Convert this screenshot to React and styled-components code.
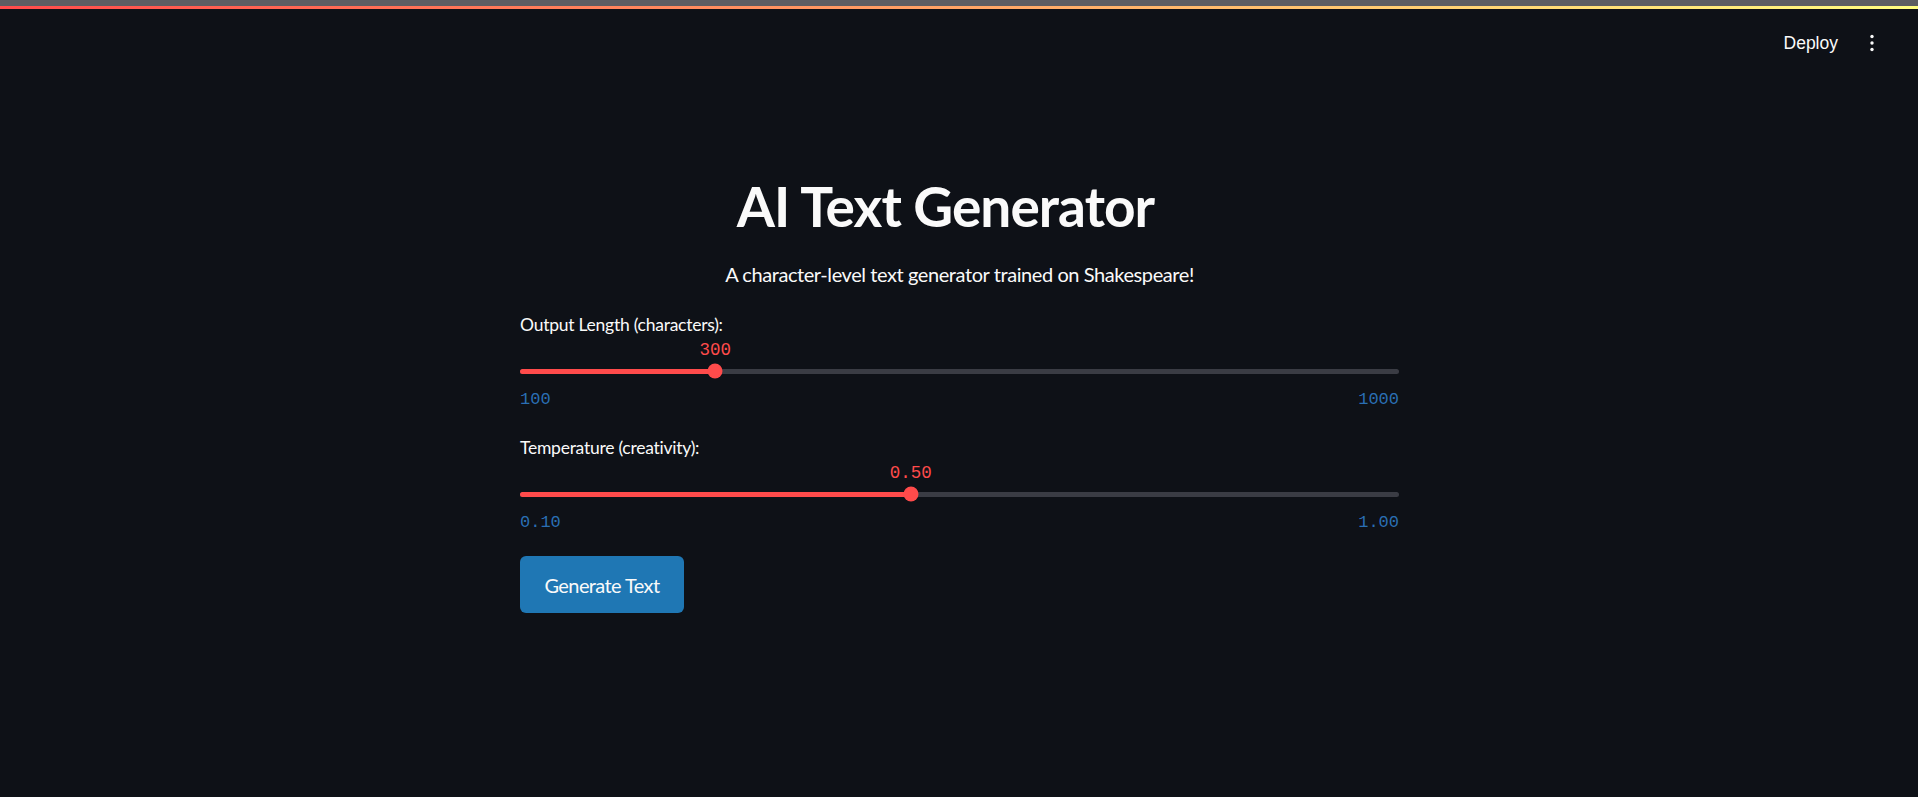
import React from "react";
import styled, { createGlobalStyle } from "styled-components";

const GlobalStyle = createGlobalStyle`
  html, body {
    margin: 0;
    padding: 0;
    background-color: #0e1117;
  }
  body {
    font-family: "Lato", "Liberation Sans", sans-serif;
    color: #fafafa;
  }
`;

const AppWrap = styled.div`
  min-height: 797px;
  background-color: #0e1117;
  display: flex;
  flex-direction: column;
`;

const TopStrip = styled.div`
  height: 6px;
  background-color: #5c5d62;
`;

const Decoration = styled.div`
  height: 3px;
  background-image: linear-gradient(90deg, #ff4b4b, #fffd80);
`;

const Header = styled.header`
  display: flex;
  justify-content: flex-end;
  align-items: center;
  height: 86px;
  padding-right: 38px;
  margin-top: -9px;
  gap: 26px;
`;

const DeployButton = styled.button`
  background: none;
  border: none;
  color: #fafafa;
  font-family: "Liberation Sans", Arial, sans-serif;
  font-size: 17.5px;
  padding: 0;
  cursor: pointer;
`;

const MenuButton = styled.button`
  background: none;
  border: none;
  padding: 0;
  width: 16px;
  height: 24px;
  display: flex;
  align-items: center;
  justify-content: center;
  cursor: pointer;
`;

const Main = styled.main`
  width: 879px;
  margin: 0 auto;
  padding-top: 87px;
  padding-left: 1px;
  display: flex;
  flex-direction: column;
`;

const Title = styled.h1`
  margin: 0;
  padding-right: 28px;
  text-align: center;
  font-size: 55px;
  line-height: 66px;
  font-weight: 700;
  letter-spacing: -0.95px;
`;

const Subtitle = styled.p`
  margin: 19px 0 0;
  text-align: center;
  font-size: 20px;
  line-height: 32px;
  letter-spacing: -0.42px;
`;

const Field = styled.div`
  margin-top: ${(p) => p.$gap}px;
`;

const Label = styled.div`
  font-size: 17.5px;
  line-height: 28px;
  letter-spacing: -0.25px;
`;

const SliderBox = styled.div`
  position: relative;
  padding-top: 22px;
`;

const ValueTag = styled.div`
  position: absolute;
  top: 0;
  transform: translateX(-50%);
  font-family: "Liberation Mono", monospace;
  font-size: 17.5px;
  line-height: 22px;
  color: #ff4b4b;
  white-space: nowrap;
`;

const TrackArea = styled.div`
  position: relative;
  height: 20px;
  display: flex;
  align-items: center;
`;

const Track = styled.div`
  width: 100%;
  height: 5px;
  border-radius: 3px;
  background-color: #3a3c44;
  overflow: hidden;
`;

const Fill = styled.div`
  height: 100%;
  background-color: #ff4b4b;
`;

const Thumb = styled.div`
  position: absolute;
  top: 50%;
  width: 15px;
  height: 15px;
  border-radius: 50%;
  background-color: #ff4b4b;
  transform: translate(-50%, -50%);
`;

const Ticks = styled.div`
  display: flex;
  justify-content: space-between;
  margin-top: 8px;
  font-family: "Liberation Mono", monospace;
  font-size: 17px;
  line-height: 22px;
  color: #2a6fb4;
`;

const GenerateButton = styled.button`
  align-self: flex-start;
  margin-top: 22px;
  width: 164px;
  height: 57px;
  border: none;
  border-radius: 6px;
  background-color: #1f77b4;
  color: #fafafa;
  font-family: "Lato", sans-serif;
  font-size: 20px;
  letter-spacing: -0.6px;
  cursor: pointer;
`;

const DotsIcon = () => (
  <svg width="6" height="20" viewBox="0 0 6 20">
    <circle cx="3" cy="3.5" r="1.7" fill="#fafafa" />
    <circle cx="3" cy="10" r="1.7" fill="#fafafa" />
    <circle cx="3" cy="16.5" r="1.7" fill="#fafafa" />
  </svg>
);

const Slider = ({ label, min, max, value, format, gap }) => {
  const pct = ((value - min) / (max - min)) * 100;
  return (
    <Field $gap={gap}>
      <Label>{label}</Label>
      <SliderBox>
        <ValueTag style={{ left: `${pct}%` }}>{format(value)}</ValueTag>
        <TrackArea>
          <Track>
            <Fill style={{ width: `${pct}%` }} />
          </Track>
          <Thumb style={{ left: `${pct}%` }} />
        </TrackArea>
        <Ticks>
          <span>{format(min)}</span>
          <span>{format(max)}</span>
        </Ticks>
      </SliderBox>
    </Field>
  );
};

const App = () => {
  return (
    <>
      <GlobalStyle />
      <AppWrap>
        <TopStrip />
        <Decoration />
        <Header>
          <DeployButton>Deploy</DeployButton>
          <MenuButton>
            <DotsIcon />
          </MenuButton>
        </Header>
        <Main>
          <Title>AI Text Generator</Title>
          <Subtitle>A character-level text generator trained on Shakespeare!</Subtitle>
          <Slider
            label="Output Length (characters):"
            min={100}
            max={1000}
            value={300}
            format={(v) => String(v)}
            gap={21}
          />
          <Slider
            label="Temperature (creativity):"
            min={0.1}
            max={1.0}
            value={0.5}
            format={(v) => v.toFixed(2)}
            gap={23}
          />
          <GenerateButton>Generate Text</GenerateButton>
        </Main>
      </AppWrap>
    </>
  );
};

export default App;
